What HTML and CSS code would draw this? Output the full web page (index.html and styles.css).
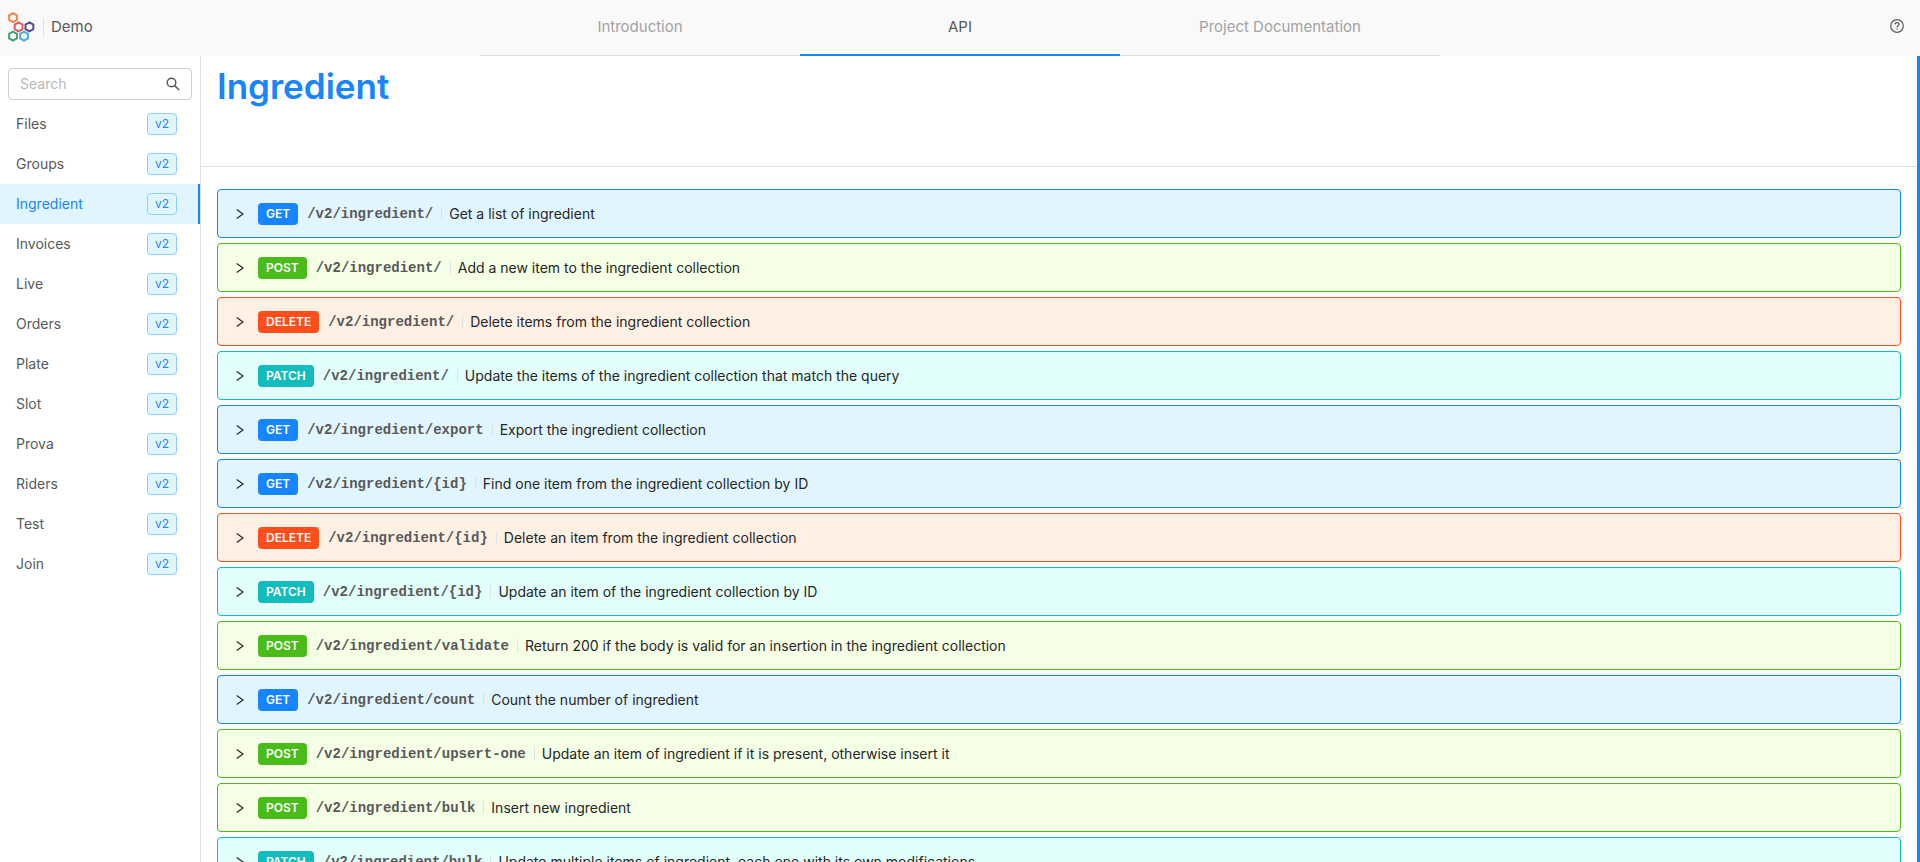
FILE: index.html
```html
<!DOCTYPE html>
<html lang="en">
<head>
<meta charset="utf-8">
<title>Demo - API</title>
<link rel="stylesheet" href="styles.css">
</head>
<body>
<header class="topbar">
  <div class="brand">
    <svg class="logo" width="30" height="32" viewBox="0 0 30 32" fill="none" stroke-width="2" aria-hidden="true">
      <path stroke="#f0884a" d="M5 2.200l3.900 2.200v4.500L5 11.100 1.100 8.900V4.400z"/>
      <path stroke="#e25a60" d="M10.600 11.400l3.900 2.200v4.500l-3.900 2.200-3.900-2.200v-4.500z"/>
      <path stroke="#584b8d" d="M21.400 11.400l3.900 2.200v4.500l-3.900 2.200-3.900-2.200v-4.500z"/>
      <path stroke="#45a077" d="M5 20.600l3.900 2.200v4.500L5 29.500l-3.900-2.200v-4.500z"/>
      <path stroke="#46b0dc" d="M16 20.600l3.900 2.200v4.500L16 29.500l-3.900-2.200v-4.500z"/>
    </svg>
    <span class="brand-name">Demo</span>
  </div>
  <nav class="tabs" aria-label="Sections">
    <a class="tab" href="#introduction">Introduction</a>
    <a class="tab tab-active" href="#api">API</a>
    <a class="tab" href="#documentation">Project Documentation</a>
  </nav>
  <div class="tools">
    <button class="help" type="button" aria-label="Help">
      <svg width="14" height="14" viewBox="0 0 14 14" fill="none" stroke="#595959" stroke-width="1.200" aria-hidden="true">
        <circle cx="7" cy="7" r="6.300"/>
        <path d="M5 5.600C5 4.300 5.900 3.700 7 3.700s2 .700 2 1.700C9 6.700 7 6.700 7 8.300"/>
        <circle cx="7" cy="10" r=".7" fill="#595959" stroke="none"/>
      </svg>
    </button>
  </div>
</header>
<div class="layout">
  <aside class="sidebar">
    <div class="search">
      <input class="search-input" type="search" placeholder="Search" aria-label="Search">
      <svg width="14" height="14" viewBox="0 0 14 14" fill="none" stroke="#595959" stroke-width="1.500" aria-hidden="true">
        <circle cx="5.500" cy="5.500" r="4.300"/>
        <path d="M8.600 8.600l4.600 4.400"/>
      </svg>
    </div>
    <nav class="menu" aria-label="Collections">
      <a class="item" href="#files">Files<span class="version">v2</span></a>
      <a class="item" href="#groups">Groups<span class="version">v2</span></a>
      <a class="item item-active" href="#ingredient">Ingredient<span class="version">v2</span></a>
      <a class="item" href="#invoices">Invoices<span class="version">v2</span></a>
      <a class="item" href="#live">Live<span class="version">v2</span></a>
      <a class="item" href="#orders">Orders<span class="version">v2</span></a>
      <a class="item" href="#plate">Plate<span class="version">v2</span></a>
      <a class="item" href="#slot">Slot<span class="version">v2</span></a>
      <a class="item" href="#prova">Prova<span class="version">v2</span></a>
      <a class="item" href="#riders">Riders<span class="version">v2</span></a>
      <a class="item" href="#test">Test<span class="version">v2</span></a>
      <a class="item" href="#join">Join<span class="version">v2</span></a>
    </nav>
  </aside>
  <main class="content">
    <h1 class="title">Ingredient</h1>
    <div class="endpoints">
      <button type="button" class="endpoint get"><svg class="chevron" viewBox="0 0 8 10"><path d="M.7.500l6.300 4.500-6.300 4.500"/></svg><span class="method">GET</span><code class="path">/v2/ingredient/</code><span class="summary">Get a list of ingredient</span></button>
      <button type="button" class="endpoint post"><svg class="chevron" viewBox="0 0 8 10"><path d="M.7.500l6.300 4.500-6.300 4.500"/></svg><span class="method">POST</span><code class="path">/v2/ingredient/</code><span class="summary">Add a new item to the ingredient collection</span></button>
      <button type="button" class="endpoint delete"><svg class="chevron" viewBox="0 0 8 10"><path d="M.7.500l6.300 4.500-6.300 4.500"/></svg><span class="method">DELETE</span><code class="path">/v2/ingredient/</code><span class="summary">Delete items from the ingredient collection</span></button>
      <button type="button" class="endpoint patch"><svg class="chevron" viewBox="0 0 8 10"><path d="M.7.500l6.300 4.500-6.300 4.500"/></svg><span class="method">PATCH</span><code class="path">/v2/ingredient/</code><span class="summary">Update the items of the ingredient collection that match the query</span></button>
      <button type="button" class="endpoint get"><svg class="chevron" viewBox="0 0 8 10"><path d="M.7.500l6.300 4.500-6.300 4.500"/></svg><span class="method">GET</span><code class="path">/v2/ingredient/export</code><span class="summary">Export the ingredient collection</span></button>
      <button type="button" class="endpoint get"><svg class="chevron" viewBox="0 0 8 10"><path d="M.7.500l6.300 4.500-6.300 4.500"/></svg><span class="method">GET</span><code class="path">/v2/ingredient/{id}</code><span class="summary">Find one item from the ingredient collection by ID</span></button>
      <button type="button" class="endpoint delete"><svg class="chevron" viewBox="0 0 8 10"><path d="M.7.500l6.300 4.500-6.300 4.500"/></svg><span class="method">DELETE</span><code class="path">/v2/ingredient/{id}</code><span class="summary">Delete an item from the ingredient collection</span></button>
      <button type="button" class="endpoint patch"><svg class="chevron" viewBox="0 0 8 10"><path d="M.7.500l6.300 4.500-6.300 4.500"/></svg><span class="method">PATCH</span><code class="path">/v2/ingredient/{id}</code><span class="summary">Update an item of the ingredient collection by ID</span></button>
      <button type="button" class="endpoint post"><svg class="chevron" viewBox="0 0 8 10"><path d="M.7.500l6.300 4.500-6.300 4.500"/></svg><span class="method">POST</span><code class="path">/v2/ingredient/validate</code><span class="summary">Return 200 if the body is valid for an insertion in the ingredient collection</span></button>
      <button type="button" class="endpoint get"><svg class="chevron" viewBox="0 0 8 10"><path d="M.7.500l6.300 4.500-6.300 4.500"/></svg><span class="method">GET</span><code class="path">/v2/ingredient/count</code><span class="summary">Count the number of ingredient</span></button>
      <button type="button" class="endpoint post"><svg class="chevron" viewBox="0 0 8 10"><path d="M.7.500l6.300 4.500-6.300 4.500"/></svg><span class="method">POST</span><code class="path">/v2/ingredient/upsert-one</code><span class="summary">Update an item of ingredient if it is present, otherwise insert it</span></button>
      <button type="button" class="endpoint post"><svg class="chevron" viewBox="0 0 8 10"><path d="M.7.500l6.300 4.500-6.300 4.500"/></svg><span class="method">POST</span><code class="path">/v2/ingredient/bulk</code><span class="summary">Insert new ingredient</span></button>
      <button type="button" class="endpoint patch"><svg class="chevron" viewBox="0 0 8 10"><path d="M.7.500l6.300 4.500-6.300 4.500"/></svg><span class="method">PATCH</span><code class="path">/v2/ingredient/bulk</code><span class="summary">Update multiple items of ingredient, each one with its own modifications</span></button>
    </div>
  </main>
</div>
</body>
</html>
```
FILE: styles.css
```css
* {
  box-sizing: border-box;
}

body {
  display: flex;
  flex-direction: column;
  height: 100vh;
  margin: 0;
  overflow: hidden;
  background: #fff;
  color: #595959;
  font: 14px/22px Inter, "Liberation Sans", sans-serif;
}

a {
  color: inherit;
  text-decoration: none;
}

button,
input {
  font: inherit;
}

.topbar {
  display: grid;
  grid-template-columns: 1fr 2fr 1fr;
  flex: none;
  height: 56px;
  background: #f9f9f9;
  font-size: 15px;
}

.brand {
  display: flex;
  align-items: center;
  padding: 0 8px 2px;
}

.brand-name {
  margin-left: 5px;
  padding-left: 7px;
  border-left: 1px solid #e1e1e1;
  line-height: 18px;
}

.tabs {
  display: grid;
  grid-template-columns: repeat(3, 1fr);
}

.tab {
  padding-top: 16px;
  border-bottom: 1px solid #e1e1e1;
  color: #a3a3a3;
  text-align: center;
}

.tab-active {
  border-bottom: 2px solid #1785ff;
  color: #595959;
}

.tools {
  display: flex;
  align-items: center;
  justify-content: flex-end;
  padding: 0 16px 4px;
}

.help {
  display: flex;
  padding: 0;
  border: 0;
  background: none;
}

.layout {
  display: flex;
  flex: 1;
  min-height: 0;
}

.sidebar {
  flex: none;
  width: 201px;
  padding-top: 12px;
  border-right: 1px solid #e1e1e1;
}

.search {
  display: flex;
  align-items: center;
  height: 32px;
  margin: 0 8px 4px;
  padding: 0 11px;
  border: 1px solid #d0d0d0;
  border-radius: 4px;
}

.search-input {
  flex: 1;
  min-width: 0;
  padding: 0;
  border: 0;
  outline: 0;
  background: none;
}

.search-input::placeholder {
  color: #b8b8b8;
}

.item {
  display: flex;
  align-items: center;
  justify-content: space-between;
  height: 40px;
  padding: 0 23px 0 16px;
}

.item-active {
  padding-right: 21px;
  border-right: 2px solid #1785ff;
  background: #e1f5ff;
  color: #1785ff;
}

.version {
  padding: 0 7px;
  border: 1px solid #87cfff;
  border-radius: 4px;
  background: #e1f5ff;
  color: #1785ff;
  font-size: 12px;
  line-height: 20px;
}

.content {
  flex: 1;
  min-width: 0;
  overflow: hidden;
  border-right: 3px solid #1785ff;
}

.title {
  height: 111px;
  margin: 0;
  padding: 8px 16px;
  border-bottom: 1px solid #e1e1e1;
  color: #1785ff;
  font-size: 35px;
  font-weight: 600;
  line-height: 44px;
}

.endpoints {
  display: flex;
  flex-direction: column;
  gap: 5px;
  padding: 22px 16px;
}

.endpoint {
  display: flex;
  flex: none;
  align-items: center;
  height: 49px;
  padding: 0 18px;
  border: 1px solid var(--accent);
  border-radius: 4px;
  background: var(--tint);
  color: #262626;
  text-align: left;
}

.get {
  --accent: #1785ff;
  --tint: #e1f5ff;
}

.post {
  --accent: #49bc19;
  --tint: #f5ffe6;
}

.delete {
  --accent: #ff4d1c;
  --tint: #fff0e4;
}

.patch {
  --accent: #13bcbc;
  --tint: #e2fffb;
}

.chevron {
  width: 8px;
  height: 10px;
  margin-right: 14px;
  fill: none;
  stroke: #262626;
  stroke-width: 1.2;
}

.method {
  padding: 0 8px;
  border-radius: 4px;
  background: var(--accent);
  color: #fff;
  font-size: 12px;
  font-weight: 600;
}

.path {
  margin: 0 8px 0 9px;
  color: #595959;
  font: bold 14px/22px "Liberation Mono", monospace;
}

.summary {
  padding-left: 8px;
  background: linear-gradient(#e1e1e1, #e1e1e1) left center / 1px 13px no-repeat;
}
```
